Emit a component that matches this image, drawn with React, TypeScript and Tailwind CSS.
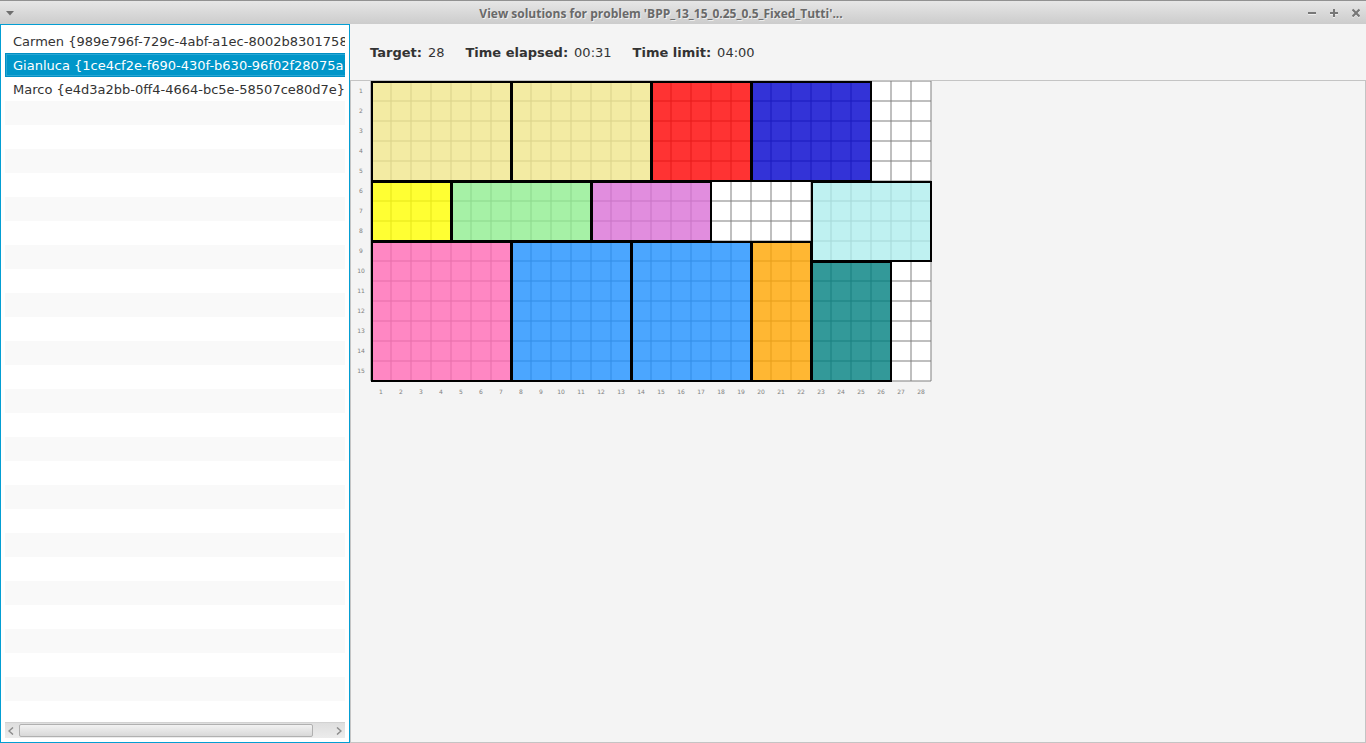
import React, { useState } from "react";

const CELL = 20;
const COLS = 28;
const ROWS = 15;

type Piece = { x: number; y: number; w: number; h: number; color: string };

const pieces: Piece[] = [
  { x: 0, y: 0, w: 7, h: 5, color: "#f0e68c" },
  { x: 7, y: 0, w: 7, h: 5, color: "#f0e68c" },
  { x: 14, y: 0, w: 5, h: 5, color: "#ff0000" },
  { x: 19, y: 0, w: 6, h: 5, color: "#0000cd" },
  { x: 0, y: 5, w: 4, h: 3, color: "#ffff00" },
  { x: 4, y: 5, w: 7, h: 3, color: "#90ee90" },
  { x: 11, y: 5, w: 6, h: 3, color: "#da70d6" },
  { x: 22, y: 5, w: 6, h: 4, color: "#afeeee" },
  { x: 0, y: 8, w: 7, h: 7, color: "#ff69b4" },
  { x: 7, y: 8, w: 6, h: 7, color: "#1e90ff" },
  { x: 13, y: 8, w: 6, h: 7, color: "#1e90ff" },
  { x: 19, y: 8, w: 3, h: 7, color: "#ffa500" },
  { x: 22, y: 9, w: 4, h: 6, color: "#008080" },
];

const participants = [
  "Carmen {989e796f-729c-4abf-a1ec-8002b8301758}",
  "Gianluca {1ce4cf2e-f690-430f-b630-96f02f28075a}",
  "Marco {e4d3a2bb-0ff4-4664-bc5e-58507ce80d7e}",
];

const range = (n: number) => Array.from({ length: n }, (_, i) => i);

function TitleBar() {
  return (
    <header className="flex h-6 shrink-0 items-center border-t border-[#919191] bg-linear-to-b from-[#e6e6e6] to-[#cccccc]">
      <button aria-label="Window menu" className="flex w-5 items-center pt-0.5 pl-1.5">
        <svg width="8" height="5" viewBox="0 0 8 5" aria-hidden="true">
          <path d="M0 0h8L4 4.5z" fill="#6e6e6e" />
        </svg>
      </button>
      <h1 className="flex-1 truncate pt-0.5 text-center font-['Open_Sans','Noto_Sans',sans-serif] text-[12px] leading-5 font-bold text-[#696969] [text-shadow:1px_1px_0_#eeeeee]">
        View solutions for problem 'BPP_13_15_0.25_0.5_Fixed_Tutti'...
      </h1>
      <div className="flex w-16 items-center justify-end gap-3.5 pr-1.5">
        <button aria-label="Minimize">
          <svg width="8" height="10" viewBox="0 0 8 10" aria-hidden="true" className="block">
            <path d="M0 6.5h8" stroke="#eeeeee" strokeWidth="1" />
            <path d="M0 5h8" stroke="#777777" strokeWidth="2" />
          </svg>
        </button>
        <button aria-label="Maximize">
          <svg width="8" height="10" viewBox="0 0 8 10" aria-hidden="true" className="block">
            <path d="M0 6.5h8M3 9.5h2" stroke="#eeeeee" strokeWidth="1" />
            <path d="M0 5h8M4 1v8" stroke="#777777" strokeWidth="2" />
          </svg>
        </button>
        <button aria-label="Close">
          <svg width="8" height="10" viewBox="0 0 8 10" aria-hidden="true" className="block">
            <path d="M0.5 2.5l7 7M7.5 2.5l-7 7" stroke="#eeeeee" strokeWidth="2" />
            <path d="M0.5 1.5l7 7M7.5 1.5l-7 7" stroke="#777777" strokeWidth="2.2" />
          </svg>
        </button>
      </div>
    </header>
  );
}

function ScrollBar() {
  return (
    <div className="flex h-4 shrink-0 items-center border-t border-[#d2d2d2] bg-linear-to-b from-[#dedede] to-[#ececec]">
      <button aria-label="Scroll left" className="flex w-3.5 justify-center pr-0.5">
        <svg width="6" height="8" viewBox="0 0 6 8" aria-hidden="true">
          <path d="M5 0.5L1 4l4 3.5" fill="none" stroke="#8c8c8c" strokeWidth="1.5" />
        </svg>
      </button>
      <div className="flex-1 pr-[23px]">
        <div className="h-[13px] w-full rounded-xs border border-[#b0b0b0] bg-linear-to-b from-[#f2f2f2] to-[#d8d8d8]" />
      </div>
      <button aria-label="Scroll right" className="flex w-[9px] justify-start">
        <svg width="6" height="8" viewBox="0 0 6 8" aria-hidden="true">
          <path d="M1 0.5L5 4L1 7.5" fill="none" stroke="#8c8c8c" strokeWidth="1.5" />
        </svg>
      </button>
    </div>
  );
}

function ParticipantList() {
  const [selected, setSelected] = useState(1);
  return (
    <aside className="flex w-[350px] shrink-0 flex-col border border-[#039ed3] bg-white p-1">
      <ul className="min-h-0 flex-1 overflow-hidden bg-[repeating-linear-gradient(to_bottom,#ffffff_0_24px,#f9f9f9_24px_48px)]">
        {participants.map((name, i) => (
          <li key={name} className="h-6">
            <button
              onClick={() => setSelected(i)}
              className={
                i === selected
                  ? "block h-6 w-full overflow-hidden border border-r-0 border-[#008fc4] bg-[#0096c9] px-[7px] text-left leading-6 whitespace-nowrap text-white shadow-[inset_1px_1px_0_#28a6d4,inset_0_-1px_0_#28a6d4]"
                  : "block h-6 w-full overflow-hidden bg-white px-2 text-left leading-[26px] whitespace-nowrap"
              }
            >
              {name}
            </button>
          </li>
        ))}
      </ul>
      <ScrollBar />
    </aside>
  );
}

function Stat({ label, value }: { label: string; value: string }) {
  return (
    <div className="flex gap-1.5">
      <dt className="font-bold">{label}</dt>
      <dd>{value}</dd>
    </div>
  );
}

function Board() {
  return (
    <svg width="600" height="330" viewBox="0 0 600 330" role="img" aria-label="Packing solution" className="block">
      <rect x="20" y="0" width={COLS * CELL} height={ROWS * CELL} fill="#ffffff" />
      <g stroke="#808080" strokeOpacity="0.5" strokeWidth="2">
        {range(COLS + 1).map((c) => (
          <path key={c} d={`M${20 + c * CELL} 0v${ROWS * CELL}`} />
        ))}
        {range(ROWS + 1).map((r) => (
          <path key={r} d={`M20 ${r * CELL}h${COLS * CELL}`} />
        ))}
      </g>
      {pieces.map((p, i) => (
        <g key={i}>
          <rect x={20 + p.x * CELL} y={p.y * CELL} width={p.w * CELL} height={p.h * CELL} fill={p.color} fillOpacity="0.8" />
          <rect
            x={21 + p.x * CELL}
            y={1 + p.y * CELL}
            width={p.w * CELL - 1}
            height={p.h * CELL - 1}
            fill="none"
            stroke="#000000"
            strokeWidth="2"
          />
        </g>
      ))}
      <g fill="#808080" fontSize="6" textAnchor="middle">
        {range(ROWS).map((r) => (
          <text key={r} x="10" y={r * CELL + 12}>{r + 1}</text>
        ))}
        {range(COLS).map((c) => (
          <text key={c} x={30 + c * CELL} y={ROWS * CELL + 13}>{c + 1}</text>
        ))}
      </g>
    </svg>
  );
}

export default function App() {
  return (
    <div className="flex h-screen flex-col overflow-hidden bg-[#f4f4f4] font-['DejaVu_Sans',sans-serif] text-[13px] text-[#333333]">
      <TitleBar />
      <div className="flex min-h-0 flex-1">
        <ParticipantList />
        <main className="flex min-w-0 flex-1 flex-col">
          <dl className="flex h-14 shrink-0 items-center gap-[21px] pt-0.5 pl-5">
            <Stat label="Target:" value="28" />
            <Stat label="Time elapsed:" value="00:31" />
            <Stat label="Time limit:" value="04:00" />
          </dl>
          <section className="min-h-0 flex-1 overflow-hidden border border-[#c4c4c4]">
            <Board />
          </section>
        </main>
      </div>
    </div>
  );
}
